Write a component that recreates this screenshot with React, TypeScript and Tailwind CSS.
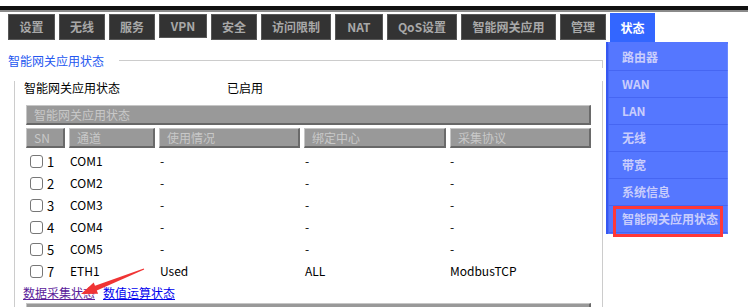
const tabs = [
  { label: "设置", cls: "w-[47px] h-[26px] mt-[1px]" },
  { label: "无线", cls: "w-[46px] h-[26px] mt-[1px]" },
  { label: "服务", cls: "w-[46px] h-[26px] mt-[1px]" },
  { label: "VPN", cls: "w-[48px] h-[24px] mt-[1px]" },
  { label: "安全", cls: "w-[46px] h-[26px] mt-[1px]" },
  { label: "访问限制", cls: "w-[70px] h-[26px] mt-[1px]" },
  { label: "NAT", cls: "w-[48px] h-[26px] mt-[1px]" },
  { label: "QoS设置", cls: "w-[70px] h-[26px] mt-[1px]" },
  { label: "智能网关应用", cls: "w-[95px] h-[26px] mt-[1px]" },
  { label: "管理", cls: "w-[46px] h-[26px] mt-[1px]" },
];

const menu = ["路由器", "WAN", "LAN", "无线", "带宽", "系统信息", "智能网关应用状态"];

const rows = [
  { sn: "1", ch: "COM1", use: "-", bind: "-", proto: "-" },
  { sn: "2", ch: "COM2", use: "-", bind: "-", proto: "-" },
  { sn: "3", ch: "COM3", use: "-", bind: "-", proto: "-" },
  { sn: "4", ch: "COM4", use: "-", bind: "-", proto: "-" },
  { sn: "5", ch: "COM5", use: "-", bind: "-", proto: "-" },
  { sn: "7", ch: "ETH1", use: "Used", bind: "ALL", proto: "ModbusTCP" },
];

const bar =
  "bg-[#999999] border-t border-l border-t-[#c6c6c6] border-l-[#c6c6c6] border-b-2 border-r-2 border-b-[#686868] border-r-[#6a6a6a] text-[#c8c8c8]";

export default function App() {
  return (
    <div
      className="relative w-[748px] h-[307px] overflow-hidden bg-white text-[12px] leading-[14px] text-black"
      style={{ fontFamily: '"Noto Sans CJK SC", "Liberation Sans", sans-serif' }}
    >
      {/* top rule */}
      <div className="mt-[6px] h-[4px] bg-[#111111]" />
      <div className="h-[2px] bg-[#8a8a8a]" />

      {/* tabs */}
      <div className="flex items-start gap-[4px] pl-[8px] mt-[1px] h-[29px]">
        {tabs.map((t) => (
          <div
            key={t.label}
            className={`${t.cls} flex items-center justify-center bg-[#333333] border border-[#575757] text-[#a8a8a8] font-bold text-[12px]`}
          >
            {t.label}
          </div>
        ))}
        <div className="w-[45px] h-[29px] flex items-center justify-center bg-[#3366ff] text-white font-bold text-[12px]">
          状态
        </div>
      </div>

      <div className="flex">
        {/* main fieldset */}
        <div className="w-[606px] pt-[12px]">
          <div className="flex items-start w-[603px] h-[14px]">
            <span className="pl-[8px] text-[#2457f0] leading-[14px]">智能网关应用状态</span>
            <div className="flex-1 ml-[15px] mt-[6px] h-[8px] border-t border-r border-[#cccccc]" />
          </div>
          <div className="ml-[14px] w-[589px] h-[260px] border-l border-r border-[#cccccc] px-[11px]">
            <div className="flex h-[14px] mt-[13px] -ml-[2px]">
              <span className="w-[203px]">智能网关应用状态</span>
              <span>已启用</span>
            </div>

            <div className={`${bar} mt-[10px] h-[20px] flex items-center pl-[7px]`}>智能网关应用状态</div>

            <div className="flex gap-[4px] mt-[3px]">
              {[
                { t: "SN", w: "w-[39px]" },
                { t: "通道", w: "w-[86px]" },
                { t: "使用情况", w: "w-[141px]" },
                { t: "绑定中心", w: "w-[142px]" },
                { t: "采集协议", w: "w-[141px]" },
              ].map((h) => (
                <div key={h.t} className={`${bar} ${h.w} h-[20px] flex items-center pl-[7px]`}>
                  {h.t}
                </div>
              ))}
            </div>

            <div className="mt-[2px]">
              {rows.map((r) => (
                <div key={r.ch} className="flex gap-[4px] h-[22px] items-center">
                  <div className="w-[39px] flex items-center pl-[4px] gap-[4px]">
                    <span className="w-[13px] h-[13px] border border-[#777777] rounded-[3px] bg-white" />
                    <span className="text-[13px] mt-[2px]">{r.sn}</span>
                  </div>
                  <div className="w-[86px] pl-[1px]">{r.ch}</div>
                  <div className="w-[141px] pl-[1px]">{r.use}</div>
                  <div className="w-[142px] pl-[1px]">{r.bind}</div>
                  <div className="w-[141px]">{r.proto}</div>
                </div>
              ))}
            </div>

            <div className="flex gap-[8px] -ml-[3px] mt-[4px] h-[14px]">
              <a href="#" className="text-[#5a1a9a] underline">数据采集状态</a>
              <a href="#" className="text-[#0000ee] underline">数值运算状态</a>
            </div>

            <div className={`${bar} mt-[3px] h-[20px]`} />
          </div>
        </div>

        {/* dropdown menu */}
        <div className="w-[122px] h-[192px] bg-[#5577ff] border-l-2 border-[#3557f2] pt-[2px]">
          {menu.map((m) => (
            <div
              key={m}
              className="h-[27px] flex items-center pl-[13px] border-b border-l border-r border-b-[#4666f2] border-l-[#4a6af4] border-r-[#6a88ff] text-[#c9cdfc] font-bold"
            >
              {m}
            </div>
          ))}
        </div>
      </div>

      {/* annotations */}
      <div className="absolute left-[613px] top-[206px] w-[110px] h-[31px] border-[3px] border-[#ff3838] pointer-events-none" />
      <svg className="absolute left-0 top-0 pointer-events-none" width="748" height="307">
        <polygon
          points="81,294 93.7,282.5 95,285.8 143.8,268.5 144.2,269.5 96.8,290.4 98.1,293.7"
          fill="#f03434"
        />
      </svg>
    </div>
  );
}
